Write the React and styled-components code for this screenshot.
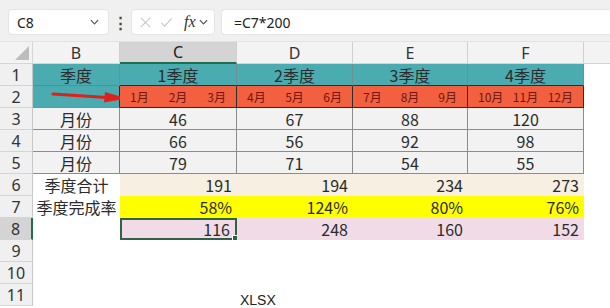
import styled, { createGlobalStyle, css } from "styled-components";

const GlobalStyle = createGlobalStyle`
  body {
    margin: 0;
    background: #ffffff;
    font-family: "Noto Sans", "Noto Sans CJK SC", sans-serif;
  }
`;

const COLS = ["B", "C", "D", "E", "F"];

const rows = [
  { n: 1, b: { text: "季度", tone: "teal" }, cells: ["1季度", "2季度", "3季度", "4季度"].map((t) => ({ text: t, tone: "tealTop" })) },
  { n: 2, b: { tone: "tealArrow", arrow: true }, months: [["1月", "2月", "3月"], ["4月", "5月", "6月"], ["7月", "8月", "9月"], ["10月", "11月", "12月"]] },
  { n: 3, b: { text: "月份", tone: "gray" }, cells: [46, 67, 88, 120].map((t) => ({ text: t, tone: "gray" })) },
  { n: 4, b: { text: "月份", tone: "gray" }, cells: [66, 56, 92, 98].map((t) => ({ text: t, tone: "gray" })) },
  { n: 5, b: { text: "月份", tone: "gray" }, cells: [79, 71, 54, 55].map((t) => ({ text: t, tone: "gray" })) },
  { n: 6, b: { text: "季度合计", tone: "plain" }, cells: [191, 194, 234, 273].map((t) => ({ text: t, tone: "total", right: true })) },
  { n: 7, b: { text: "季度完成率", tone: "plain" }, cells: ["58%", "124%", "80%", "76%"].map((t) => ({ text: t, tone: "rate", right: true })) },
  { n: 8, b: { tone: "plain" }, cells: [116, 248, 160, 152].map((t, i) => ({ text: t, tone: "pink", right: true, active: i === 0 })) },
  { n: 9, b: { tone: "plain" }, cells: [{}, {}, {}, {}].map(() => ({ tone: "plain" })) },
  { n: 10, b: { tone: "plain" }, cells: [{}, {}, {}, {}].map(() => ({ tone: "plain" })) },
  { n: 11, b: { tone: "plain" }, cells: [{ tone: "plain" }, { tone: "plain", note: "XLSX" }, { tone: "plain" }, { tone: "plain" }] },
];

const tones = {
  teal: css`
    background: #4aabb0;
    border-right: 1px solid #6f8f91;
    border-bottom: 1px solid #5b8d90;
  `,
  tealTop: css`
    background: #4aabb0;
    border-right: 1px solid #6f8f91;
    border-bottom: 1px solid #2d2d2d;
  `,
  tealArrow: css`
    background: #4aabb0;
    border-right: 1px solid #2d2d2d;
    border-bottom: 1px solid #7f8c8c;
  `,
  orange: css`
    background: #f2603f;
    border-right: 1px solid #2d2d2d;
    border-bottom: 1px solid #2d2d2d;
  `,
  gray: css`
    background: #f2f2f2;
    border-right: 1px solid #8c8c8c;
    border-bottom: 1px solid #8c8c8c;
  `,
  total: css`
    background: #f6efe2;
  `,
  rate: css`
    background: #ffff00;
  `,
  pink: css`
    background: #f0dbe6;
  `,
  plain: css`
    background: #ffffff;
  `,
};

function App() {
  return (
    <Page>
      <GlobalStyle />
      <FormulaBar>
        <NameBox>
          <span>C8</span>
          <Chevron />
        </NameBox>
        <Dots>⋮</Dots>
        <FxBox>
          <IconGlyph viewBox="0 0 14 14">
            <path d="M2 2 L12 12 M12 2 L2 12" />
          </IconGlyph>
          <IconGlyph viewBox="0 0 14 14">
            <path d="M1.5 7.5 L5 11 L12.5 2.5" />
          </IconGlyph>
          <Fx>fx</Fx>
          <Chevron />
        </FxBox>
        <FormulaInput>=C7*200</FormulaInput>
      </FormulaBar>

      <Sheet>
        <Corner>
          <svg width="14" height="14" viewBox="0 0 14 14">
            <polygon points="14,0 14,14 0,14" fill="#bdbdbd" />
          </svg>
        </Corner>
        {COLS.map((c) => (
          <ColHead key={c} $active={c === "C"}>{c}</ColHead>
        ))}
        <ColHead $rest />

        {rows.map((r) => (
          <Row key={r.n}>
            <RowHead $active={r.n === 8}>{r.n}</RowHead>
            <Cell $tone={r.b.tone}>
              {r.b.text}
              {r.b.arrow && (
                <Arrow viewBox="0 0 80 14" width="80" height="14">
                  <path d="M4 5 L58 8.5" stroke="#e0211b" strokeWidth="3" strokeLinecap="round" />
                  <polygon points="56,3 78,9.5 55,13.5" fill="#e0211b" />
                </Arrow>
              )}
            </Cell>
            {r.months
              ? r.months.map((m, i) => (
                  <Cell key={i} $tone="orange">
                    <Months>
                      {m.map((x) => (
                        <span key={x}>{x}</span>
                      ))}
                    </Months>
                  </Cell>
                ))
              : r.cells.map((c, i) => (
                  <Cell key={i} $tone={c.tone} $right={c.right} $active={c.active}>
                    {c.text}
                    {c.note && <Note>{c.note}</Note>}
                    {c.active && <Handle />}
                  </Cell>
                ))}
            <Cell $tone="plain" />
          </Row>
        ))}
      </Sheet>
    </Page>
  );
}

function Chevron() {
  return (
    <ChevronSvg viewBox="0 0 10 6">
      <path d="M1 1 L5 5 L9 1" />
    </ChevronSvg>
  );
}

export default App;

const Page = styled.div`
  width: 610px;
  height: 308px;
  overflow: hidden;
  background: #ffffff;
`;

const FormulaBar = styled.div`
  height: 42px;
  box-sizing: border-box;
  padding: 9px 0 6px 8px;
  background: #f0f0f0;
  display: flex;
  align-items: stretch;
  border-bottom: 1px solid #e2e2e2;
`;

const NameBox = styled.div`
  width: 101px;
  box-sizing: border-box;
  background: #ffffff;
  border: 1px solid #e4e4e4;
  border-radius: 4px;
  display: flex;
  align-items: center;
  justify-content: space-between;
  padding: 0 9px 0 8px;
  font-size: 14px;
  color: #222;
`;

const ChevronSvg = styled.svg`
  width: 9px;
  height: 6px;
  fill: none;
  stroke: #555;
  stroke-width: 1.3;
`;

const Dots = styled.div`
  width: 22px;
  display: flex;
  align-items: center;
  justify-content: center;
  font-size: 15px;
  font-weight: bold;
  color: #444;
`;

const FxBox = styled.div`
  width: 84px;
  box-sizing: border-box;
  background: #ffffff;
  border: 1px solid #e4e4e4;
  border-radius: 4px;
  display: flex;
  align-items: center;
  gap: 8px;
  padding: 0 5px 0 7px;
`;

const IconGlyph = styled.svg`
  width: 13px;
  height: 13px;
  fill: none;
  stroke: #c8c8c8;
  stroke-width: 1.2;
`;

const Fx = styled.span`
  font-family: "Liberation Serif", serif;
  font-style: italic;
  font-size: 16px;
  color: #333;
  margin-left: 3px;
  margin-right: -5px;
`;

const FormulaInput = styled.div`
  flex: 1;
  margin-left: 6px;
  background: #ffffff;
  border: 1px solid #e4e4e4;
  border-right: none;
  border-radius: 4px 0 0 4px;
  display: flex;
  align-items: center;
  padding-left: 12px;
  font-size: 14px;
  color: #222;
`;

const Sheet = styled.div`
  display: grid;
  grid-template-columns: 33px 87px 117px 116px 115px 116px 1fr;
  grid-auto-rows: 22px;
`;

const Row = styled.div`
  display: contents;
`;

const Corner = styled.div`
  background: #f3f3f3;
  border-right: 1px solid #d6d6d6;
  border-bottom: 1px solid #d6d6d6;
  display: flex;
  align-items: flex-end;
  justify-content: flex-end;
  padding: 0 3px 3px 0;
`;

const ColHead = styled.div`
  background: ${(p) => (p.$active ? "#d4d4d4" : "#f3f3f3")};
  border-right: 1px solid #d0d0d0;
  border-bottom: ${(p) => (p.$active ? "2px solid #1f6f48" : "1px solid #d6d6d6")};
  box-sizing: border-box;
  display: flex;
  align-items: center;
  justify-content: center;
  font-size: 16px;
  color: ${(p) => (p.$active ? "#222" : "#333")};
  ${(p) => p.$rest && "border-right: none;"}
`;

const RowHead = styled.div`
  background: ${(p) => (p.$active ? "#d4d4d4" : "#f0f0f0")};
  border-bottom: 1px solid #d4d4d4;
  border-right: ${(p) => (p.$active ? "2px solid #1f6f48" : "1px solid #c8c8c8")};
  box-sizing: border-box;
  display: flex;
  align-items: center;
  justify-content: center;
  font-size: 16px;
  color: #333;
`;

const Cell = styled.div`
  position: relative;
  box-sizing: border-box;
  display: flex;
  align-items: center;
  justify-content: ${(p) => (p.$right ? "flex-end" : "center")};
  padding: 0 ${(p) => (p.$right ? "5px" : "0")} 0 0;
  font-family: "Noto Sans CJK SC", "Noto Sans", sans-serif;
  font-size: 16px;
  color: #2b2b2b;
  white-space: nowrap;
  ${(p) => tones[p.$tone]}
  ${(p) =>
    p.$active &&
    css`
      border: 2px solid #2f6247;
    `}
`;

const Months = styled.div`
  width: 100%;
  display: flex;
  justify-content: space-between;
  padding: 0 10px;
  font-size: 12px;
  color: #6e1610;
`;

const Arrow = styled.svg`
  position: absolute;
  left: 16px;
  top: 3px;
`;

const Handle = styled.span`
  position: absolute;
  right: -5px;
  bottom: -5px;
  width: 6px;
  height: 6px;
  background: #2f6247;
  border: 1px solid #ffffff;
`;

const Note = styled.span`
  position: absolute;
  left: 3px;
  bottom: -2px;
  font-family: "Liberation Sans", sans-serif;
  font-size: 14px;
  color: #222;
`;
